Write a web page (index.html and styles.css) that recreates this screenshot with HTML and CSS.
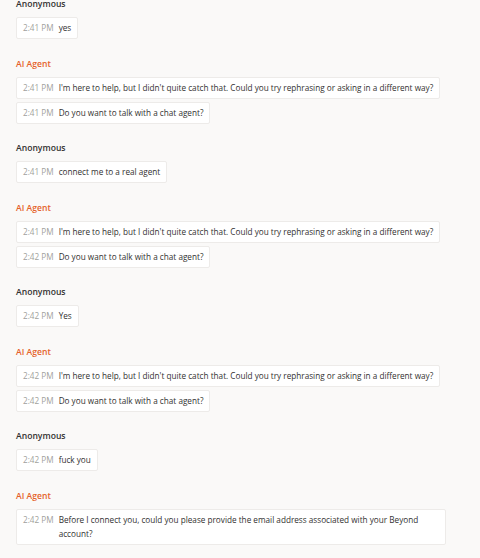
FILE: index.html
```html
<!DOCTYPE html>
<html>
<head>
<meta charset="utf-8">
<link rel="stylesheet" href="styles.css">
</head>
<body>
<div class="chat">
  <div class="group">
    <div class="name">Anonymous</div>
    <div class="msgs">
      <div class="bubble"><span class="time">2:41 PM</span><span class="text">yes</span></div>
    </div>
  </div>
  <div class="group">
    <div class="name agent">AI Agent</div>
    <div class="msgs">
      <div class="bubble"><span class="time">2:41 PM</span><span class="text">I'm here to help, but I didn't quite catch that. Could you try rephrasing or asking in a different way?</span></div>
      <div class="bubble"><span class="time">2:41 PM</span><span class="text">Do you want to talk with a chat agent?</span></div>
    </div>
  </div>
  <div class="group">
    <div class="name">Anonymous</div>
    <div class="msgs">
      <div class="bubble"><span class="time">2:41 PM</span><span class="text">connect me to a real agent</span></div>
    </div>
  </div>
  <div class="group">
    <div class="name agent">AI Agent</div>
    <div class="msgs">
      <div class="bubble"><span class="time">2:41 PM</span><span class="text">I'm here to help, but I didn't quite catch that. Could you try rephrasing or asking in a different way?</span></div>
      <div class="bubble"><span class="time">2:42 PM</span><span class="text">Do you want to talk with a chat agent?</span></div>
    </div>
  </div>
  <div class="group">
    <div class="name">Anonymous</div>
    <div class="msgs">
      <div class="bubble"><span class="time">2:42 PM</span><span class="text">Yes</span></div>
    </div>
  </div>
  <div class="group">
    <div class="name agent">AI Agent</div>
    <div class="msgs">
      <div class="bubble"><span class="time">2:42 PM</span><span class="text">I'm here to help, but I didn't quite catch that. Could you try rephrasing or asking in a different way?</span></div>
      <div class="bubble"><span class="time">2:42 PM</span><span class="text">Do you want to talk with a chat agent?</span></div>
    </div>
  </div>
  <div class="group">
    <div class="name">Anonymous</div>
    <div class="msgs">
      <div class="bubble"><span class="time">2:42 PM</span><span class="text">fuck you</span></div>
    </div>
  </div>
  <div class="group">
    <div class="name agent">AI Agent</div>
    <div class="msgs">
      <div class="bubble wide"><span class="time">2:42 PM</span><span class="text">Before I connect you, could you please provide the email address associated with your Beyond account?</span></div>
    </div>
  </div>
</div>
</body>
</html>
```
FILE: styles.css
```css
html, body {
  margin: 0;
  padding: 0;
  background: #faf9f8;
}
body {
  font-family: "Open Sans", "Noto Sans", sans-serif;
  font-size: 8.2px;
  color: #323130;
}
.chat {
  margin-top: -3px;
  padding: 0 16px;
  display: flex;
  flex-direction: column;
  gap: 17.5px;
}
.name {
  font-size: 8.6px;
  font-weight: 600;
  line-height: 14px;
  margin-bottom: 6px;
  color: #323130;
}
.name.agent {
  color: #e5622a;
}
.msgs {
  display: flex;
  flex-direction: column;
  align-items: flex-start;
  gap: 3px;
}
.bubble {
  box-sizing: border-box;
  display: flex;
  background: #ffffff;
  border: 1px solid #edebe9;
  border-radius: 2px;
  padding: 3px 6px 3px 6px;
  line-height: 14px;
  max-width: 430px;
}
.bubble.wide {
  width: 430px;
}
.time {
  color: #a19f9d;
  white-space: nowrap;
  margin-right: 5px;
}
```
